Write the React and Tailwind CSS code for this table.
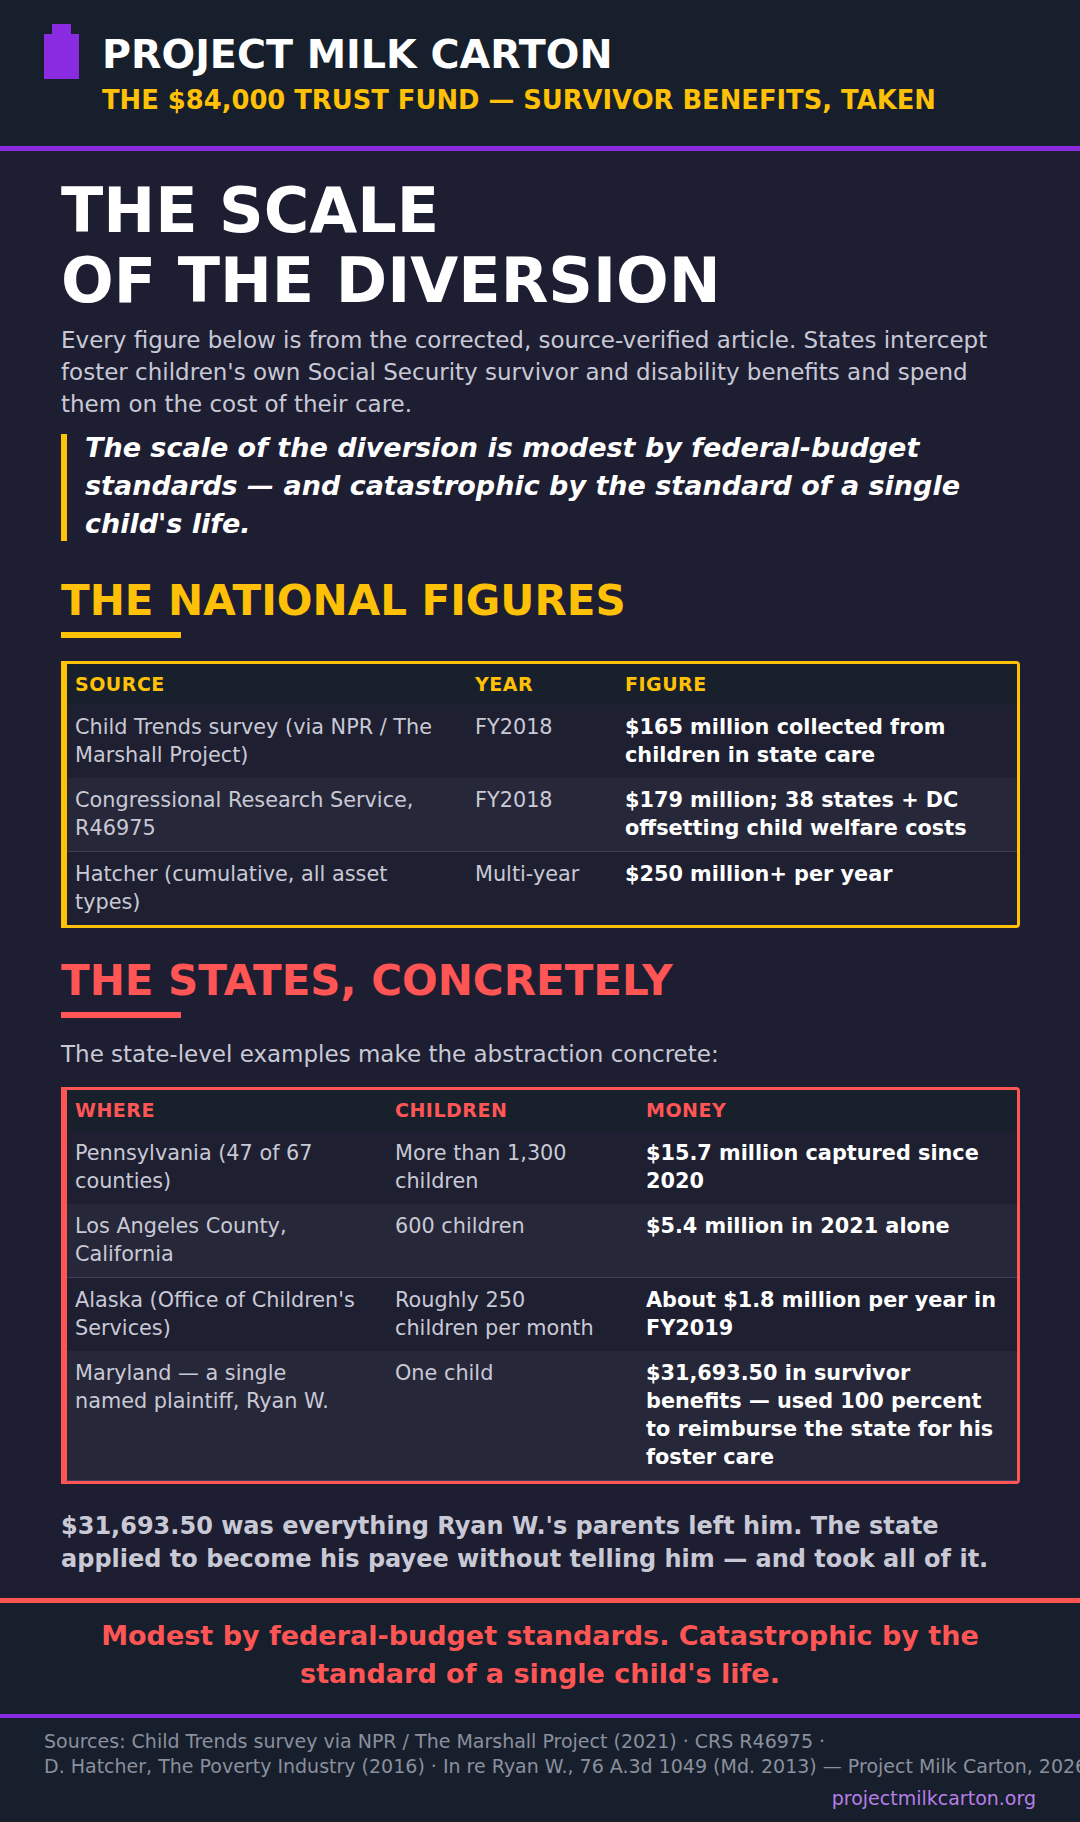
import React from "react";

const nationalRows = [
  ["Child Trends survey (via NPR / The Marshall Project)", "FY2018", "$165 million collected from children in state care"],
  ["Congressional Research Service, R46975", "FY2018", "$179 million; 38 states + DC offsetting child welfare costs"],
  ["Hatcher (cumulative, all asset types)", "Multi-year", "$250 million+ per year"],
];

const stateRows = [
  ["Pennsylvania (47 of 67 counties)", "More than 1,300 children", "$15.7 million captured since 2020"],
  ["Los Angeles County, California", "600 children", "$5.4 million in 2021 alone"],
  ["Alaska (Office of Children's Services)", "Roughly 250 children per month", "About $1.8 million per year in FY2019"],
  ["Maryland — a single named plaintiff, Ryan W.", "One child", "$31,693.50 in survivor benefits — used 100 percent to reimburse the state for his foster care"],
];

function Logo() {
  return (
    <svg width="35" height="55" viewBox="0 0 35 55" className="shrink-0">
      <rect x="8" y="0" width="19" height="11" fill="#8a2be2" />
      <rect x="0" y="10" width="35" height="45" fill="#8a2be2" />
    </svg>
  );
}

function DataTable({ head, rows, cols, accent }) {
  const border = accent === "yellow" ? "border-[#ffc107]" : "border-[#ff5555]";
  const headText = accent === "yellow" ? "text-[#ffc107]" : "text-[#ff5555]";
  const pad = ["pl-2 pr-6", "pl-2 pr-6", "pl-2 pr-[10px]"];
  return (
    <div className={`border-[3px] border-l-[6px] ${border} rounded-r-[4px] overflow-hidden`}>
      <div className={`grid ${cols} bg-[#18202c]`}>
        {head.map((h, j) => (
          <div key={h} className={`${pad[j]} py-2 text-[19px] leading-[25px] font-bold tracking-[0.5px] ${headText}`}>
            {h}
          </div>
        ))}
      </div>
      {rows.map((r, i) => (
        <div
          key={i}
          className={`grid ${cols} ${i % 2 === 1 ? "bg-[#262739] border-b border-[#3d3e5a]" : "bg-[#1e1f31]"}`}
        >
          <div className={`${pad[0]} pt-2 pb-[9px] text-[20.8px] leading-[28px] text-[#c9c9d6]`}>{r[0]}</div>
          <div className={`${pad[1]} pt-2 pb-[9px] text-[20.8px] leading-[28px] text-[#c9c9d6]`}>{r[1]}</div>
          <div className={`${pad[2]} pt-2 pb-[9px] text-[20.8px] leading-[28px] font-bold text-white`}>{r[2]}</div>
        </div>
      ))}
    </div>
  );
}

export default function App() {
  return (
    <div className="w-[1080px] min-h-[1822px] overflow-hidden bg-[#1e1e32] font-['DejaVu_Sans',sans-serif]">
      {/* header */}
      <header className="h-[151px] bg-[#171f2c] border-b-[5px] border-[#8a2be2] flex gap-[23px] px-[44px] pt-[24px]">
        <Logo />
        <div className="mt-[6px]">
          <div className="text-[39.6px] leading-[48px] font-bold text-white">PROJECT MILK CARTON</div>
          <div className="mt-[6px] text-[25.8px] leading-[32px] font-bold text-[#ffc107]">
            THE $84,000 TRUST FUND — SURVIVOR BENEFITS, TAKEN
          </div>
        </div>
      </header>

      {/* main article */}
      <main className="pl-[61px] pr-[60px] pt-[25px] pb-[22px] border-b-[5px] border-[#ff5555]">
        <h1 className="text-[62px] leading-[70px] font-bold text-white">
          THE SCALE
          <br />
          OF THE DIVERSION
        </h1>
        <p className="mt-[8px] text-[23px] leading-[32px] text-[#c9c9d6]">
          Every figure below is from the corrected, source-verified article. States intercept foster children's own
          Social Security survivor and disability benefits and spend them on the cost of their care.
        </p>
        <div className="mt-[9px] flex">
          <div className="w-[6px] shrink-0 mt-[5px] mb-[2px] bg-[#ffc107]" />
          <p className="pl-[18px] text-[27px] leading-[38px] font-bold italic text-white">
            The scale of the diversion is modest by federal-budget standards — and catastrophic by the standard of a
            single child's life.
          </p>
        </div>

        <h2 className="mt-[34px] text-[42px] leading-[48px] font-bold text-[#ffc107]">THE NATIONAL FIGURES</h2>
        <div className="mt-[7px] h-[6px] w-[120px] bg-[#ffc107]" />
        <div className="mt-[23px]">
          <DataTable
            head={["SOURCE", "YEAR", "FIGURE"]}
            rows={nationalRows}
            cols="grid-cols-[400px_150px_1fr]"
            accent="yellow"
          />
        </div>

        <h2 className="mt-[29px] text-[42px] leading-[48px] font-bold text-[#ff5555]">THE STATES, CONCRETELY</h2>
        <div className="mt-[7px] h-[6px] w-[120px] bg-[#ff5555]" />
        <p className="mt-[20px] text-[23px] leading-[32px] text-[#c9c9d6]">
          The state-level examples make the abstraction concrete:
        </p>
        <div className="mt-[17px]">
          <DataTable
            head={["WHERE", "CHILDREN", "MONEY"]}
            rows={stateRows}
            cols="grid-cols-[320px_251px_1fr]"
            accent="red"
          />
        </div>

        <p className="mt-[26px] text-[24px] leading-[33px] font-bold text-[#c9c9d6]">
          $31,693.50 was everything Ryan W.'s parents left him. The state applied to become his payee without telling
          him — and took all of it.
        </p>
      </main>

      {/* callout */}
      <section className="bg-[#171f2c] border-b-[4px] border-[#8a2be2] px-[60px] pt-[14px] pb-[21px] text-center">
        <p className="text-[27px] leading-[38px] font-bold text-[#ff5555]">
          Modest by federal-budget standards. Catastrophic by the standard of a single child's life.
        </p>
      </section>

      {/* footer */}
      <footer className="bg-[#171f2c] px-[44px] pt-[11px] pb-[11px]">
        <p className="whitespace-nowrap text-[19px] leading-[25px] text-[#8b8f9e]">
          Sources: Child Trends survey via NPR / The Marshall Project (2021) · CRS R46975 ·
          <br />
          D. Hatcher, The Poverty Industry (2016) · In re Ryan W., 76 A.3d 1049 (Md. 2013) — Project Milk Carton, 2026
        </p>
        <div className="mt-[7px] text-right text-[19px] leading-[25px] text-[#b77ee6]">projectmilkcarton.org</div>
      </footer>
    </div>
  );
}
